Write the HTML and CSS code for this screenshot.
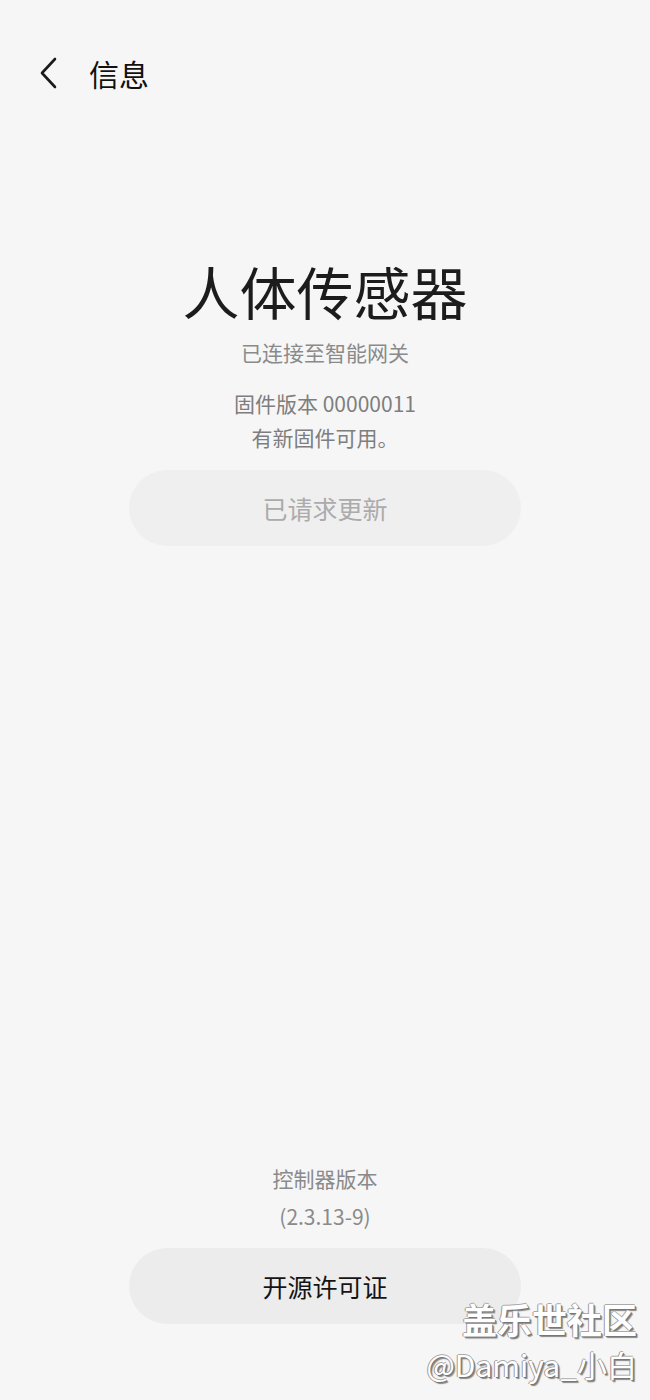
FILE: index.html
```html
<!DOCTYPE html>
<html lang="zh-CN">
<head>
  <meta charset="UTF-8" />
  <meta name="viewport" content="width=device-width, initial-scale=1.0"/>
  <title>信息</title>
  <link rel="stylesheet" href="styles.css">
</head>
<body>
  <div class="screen">
    <header class="topbar">
      <button class="back-btn" aria-label="返回">
        <svg width="22" height="32" viewBox="0 0 22 32">
          <path d="M17 2 L4 16 L17 30" fill="none" stroke="#1a1a1a" stroke-width="2.6" stroke-linecap="round" stroke-linejoin="round"/>
        </svg>
      </button>
      <h1 class="page-title">信息</h1>
    </header>

    <section class="device">
      <h2 class="device-name">人体传感器</h2>
      <p class="device-status">已连接至智能网关</p>
      <div class="firmware">
        <p>固件版本 00000011</p>
        <p>有新固件可用。</p>
      </div>
      <button class="pill-btn muted" disabled>已请求更新</button>
    </section>

    <footer class="bottom">
      <p class="ctrl-label">控制器版本</p>
      <p class="ctrl-version">(2.3.13-9)</p>
      <button class="pill-btn">开源许可证</button>
    </footer>

    <div class="watermark">
      <div class="wm-brand">盖乐世社区</div>
      <div class="wm-user">@Damiya_小白</div>
    </div>
  </div>
</body>
</html>
```

FILE: styles.css
```css
* {
  box-sizing: border-box;
}
body {
  margin: 0;
  background: #f6f6f6;
  font-family: "Noto Sans CJK SC", "Noto Sans", sans-serif;
  color: #1a1a1a;
}
.screen {
  position: relative;
  height: 1400px;
  display: flex;
  flex-direction: column;
  align-items: center;
}
.topbar {
  align-self: stretch;
  display: flex;
  align-items: center;
  height: 66px;
  margin-top: 40px;
  padding-left: 38px;
}
.back-btn {
  background: none;
  border: 0;
  padding: 0;
  width: 30px;
  height: 34px;
  display: flex;
  align-items: center;
}
.page-title {
  margin: 0 0 0 21px;
  font-size: 30px;
  font-weight: 400;
  line-height: 40px;
  color: #111;
}
.device {
  display: flex;
  flex-direction: column;
  align-items: center;
  margin-top: 152px;
}
.device-name {
  margin: 0;
  font-size: 57px;
  font-weight: 400;
  line-height: 64px;
  color: #1c1c1c;
}
.device-status {
  margin: 15px 0 0;
  font-size: 21px;
  line-height: 30px;
  color: #8a8a8a;
}
.firmware {
  margin-top: 19px;
  text-align: center;
}
.firmware p {
  margin: 0;
  font-size: 21px;
  line-height: 34px;
  color: #7e7e7e;
}
.pill-btn {
  width: 392px;
  height: 76px;
  margin-top: 16px;
  border: 0;
  border-radius: 38px;
  background: #ececec;
  font-family: inherit;
  font-size: 25px;
  color: #141414;
}
.pill-btn.muted {
  background: #efefef;
  color: #ababab;
}
.bottom {
  margin-top: auto;
  margin-bottom: 76px;
  display: flex;
  flex-direction: column;
  align-items: center;
}
.ctrl-label,
.ctrl-version {
  margin: 0;
  font-size: 21px;
  line-height: 38px;
  color: #8a8a8a;
}
.bottom .pill-btn {
  margin-top: 13px;
}
.watermark {
  position: absolute;
  right: 13px;
  bottom: 14px;
  text-align: right;
  color: #fff;
  text-shadow: 1px 1px 0 #777, -1px 0 0 #9a9a9a, 0 -1px 0 #aaa, 2px 2px 1px #888;
}
.wm-brand {
  font-size: 35px;
  font-weight: 700;
  line-height: 46px;
}
.wm-user {
  font-size: 30px;
  line-height: 44px;
}
```
